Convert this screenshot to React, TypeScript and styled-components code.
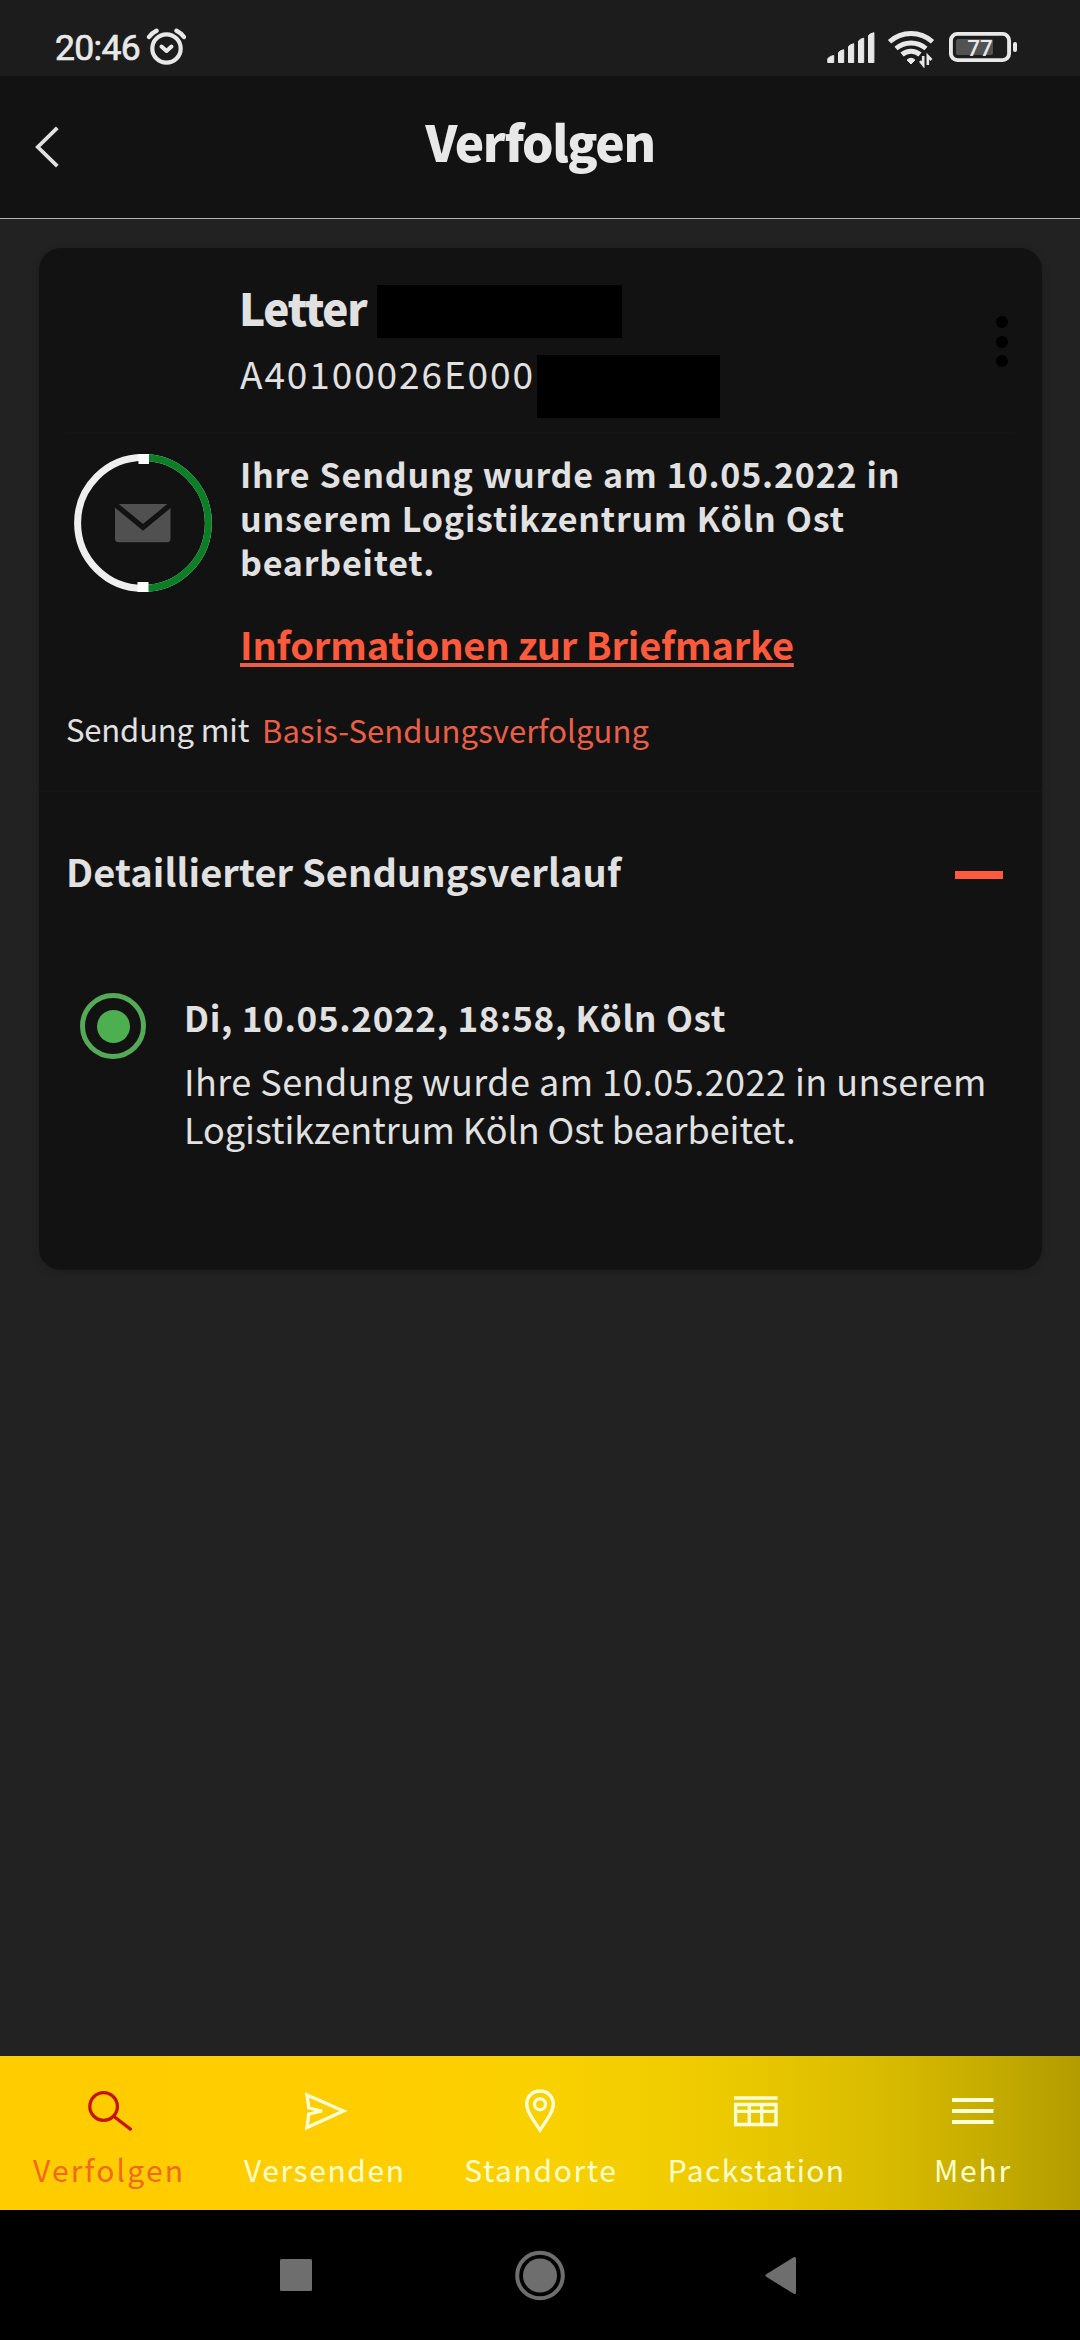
import React from "react";
import styled, { createGlobalStyle } from "styled-components";

const GlobalStyle = createGlobalStyle`
  body {
    margin: 0;
    background: #222222;
  }
  *, *::before, *::after {
    box-sizing: border-box;
  }
`;

const textFont = `"Noto Sans CJK JP", "Noto Sans", sans-serif`;

const Screen = styled.div`
  width: 1080px;
  height: 2340px;
  display: flex;
  flex-direction: column;
  background: #222222;
  color: #e1e1e1;
  font-family: ${textFont};
  overflow: hidden;
`;

/* ---------- Status bar ---------- */

const StatusBar = styled.div`
  height: 76px;
  flex: none;
  padding: 20px 63px 0 55px;
  display: flex;
  align-items: center;
  background: #1c1c1c;
  color: #e8e8e8;
`;

const Clock = styled.span`
  width: 91px;
  font: 400 35.5px/40px Roboto, sans-serif;
  letter-spacing: -0.7px;
  -webkit-text-stroke: 0.7px #e8e8e8;
`;

const StatusIcons = styled.div`
  margin-left: auto;
  display: flex;
  align-items: center;

  svg + svg {
    margin-left: 11px;
  }
  svg:last-child {
    margin-left: 13px;
  }
`;

/* ---------- Header ---------- */

const Header = styled.header`
  height: 143px;
  flex: none;
  padding: 0 32px;
  display: grid;
  grid-template-columns: 1fr auto 1fr;
  align-items: center;
  background: #121212;
  border-bottom: 1px solid #b4b4b4;
`;

const BackButton = styled.button`
  justify-self: start;
  display: flex;
  padding: 0;
  border: 0;
  background: none;
`;

const Title = styled.h1`
  margin: 0 0 12px;
  font-size: 49.5px;
  line-height: 60px;
  font-weight: 900;
  letter-spacing: -1.4px;
  color: #e8e8e8;
`;

/* ---------- Card ---------- */

const Main = styled.main`
  flex: 1;
  padding: 29px 38px 0 39px;
`;

const Card = styled.article`
  height: 1022px;
  border-radius: 22px;
  background: #121212;
  box-shadow: 0 2px 8px rgba(0, 0, 0, 0.2);
`;

const CardHead = styled.div`
  margin: 0 27px;
  padding: 37px 7px 14px 171px;
  display: flex;
  align-items: center;
  justify-content: space-between;
  border-bottom: 2px solid #151515;
`;

const Identity = styled.div`
  display: flex;
  flex-direction: column;
  gap: 17px;
`;

const IdentityRow = styled.div`
  display: flex;
  align-items: flex-start;
`;

const Name = styled.h2`
  margin: 0;
  width: 140px;
  padding-left: 2px;
  font-size: 44px;
  line-height: 44px;
  font-weight: 900;
  letter-spacing: -1.3px;
`;

const Code = styled.span`
  width: 300px;
  padding-left: 3px;
  font-size: 37px;
  line-height: 37px;
  letter-spacing: 1.9px;
`;

const Redaction = styled.span<{ $w: number; $h: number }>`
  width: ${(p) => p.$w}px;
  height: ${(p) => p.$h}px;
  background: #000;
`;

const MoreButton = styled.button`
  margin-bottom: 20px;
  padding: 0;
  border: 0;
  background: none;
  display: flex;
  flex-direction: column;
  gap: 7.4px;
`;

const Dot = styled.i`
  width: 12px;
  height: 12px;
  border-radius: 50%;
  background: #000;
`;

const StatusSection = styled.section`
  padding: 18px 27px 0 35px;
  display: flex;
  align-items: flex-start;
`;

const StatusText = styled.div`
  display: flex;
  flex-direction: column;
  align-items: flex-start;
`;

const RingSvg = styled.svg`
  flex: none;
  margin: 2px 28px 0 0;
`;

const Message = styled.p`
  margin: 0;
  font-size: 34px;
  line-height: 44px;
  font-weight: 700;
  letter-spacing: 0.8px;
  word-spacing: 0.7px;
  white-space: pre-line;
`;

const StampLink = styled.a`
  margin-top: 38px;
  font-size: 38px;
  line-height: 44px;
  font-weight: 700;
  letter-spacing: -0.15px;
  color: #ff5a3c;
  text-decoration: underline 4px #ec5f47;
  text-decoration-skip-ink: none;
  text-underline-offset: 3px;
`;

const Service = styled.div`
  height: 126px;
  padding: 43px 27px 0;
  display: flex;
  align-items: flex-start;
  gap: 9px;
  font-size: 31px;
  line-height: 40px;
  border-bottom: 2px solid #151515;
`;

const ServiceLabel = styled.span`
  width: 187px;
  letter-spacing: -0.15px;
`;

const ServiceLink = styled.a`
  padding-top: 1px;
  color: #ec5f47;
  letter-spacing: 0.1px;
`;

const HistoryHead = styled.div`
  height: 157px;
  padding: 0 39px 0 27px;
  display: flex;
  align-items: center;
  justify-content: space-between;
`;

const HistoryTitle = styled.h3`
  margin: 0;
  font-size: 38px;
  line-height: 60px;
  font-weight: 700;
  letter-spacing: 0.1px;
`;

const Minus = styled.i`
  width: 48px;
  height: 8px;
  margin-top: 9px;
  background: #ff5a3c;
`;

const Event = styled.div`
  padding: 44px 41px 0;
  display: flex;
  align-items: flex-start;
`;

const EventMarker = styled.div`
  flex: none;
  width: 66px;
  height: 66px;
  margin-right: 38px;
  border: 5px solid #55aa58;
  border-radius: 50%;
  display: grid;
  place-items: center;

  &::after {
    content: "";
    width: 33px;
    height: 33px;
    border-radius: 50%;
    background: #4cb050;
  }
`;

const EventBody = styled.div`
  padding-top: 2px;
  white-space: nowrap;
`;

const EventDate = styled.h4`
  margin: 0 0 17px;
  font-size: 35px;
  line-height: 44px;
  font-weight: 700;
  letter-spacing: 0.7px;
`;

const EventLine = styled.div<{ $spacing: number }>`
  font-size: 36px;
  line-height: 48px;
  letter-spacing: ${(p) => p.$spacing}px;
`;

/* ---------- Bottom navigation ---------- */

const Tabs = styled.nav`
  flex: none;
  height: 154px;
  display: grid;
  grid-template-columns: repeat(5, 1fr);
  background: linear-gradient(
    90deg,
    #ffcc00 0%,
    #ffcd00 35%,
    #fad100 50%,
    #ecca00 67%,
    #dabc00 81%,
    #c6ad00 91%,
    #b39c00 100%
  );
`;

const Tab = styled.a<{ $active: boolean }>`
  padding-top: 31px;
  display: flex;
  flex-direction: column;
  align-items: center;
  gap: 14px;
  color: ${(p) => (p.$active ? "#c61400" : "#ffffd6")};
`;

const TabLabel = styled.span<{ $active: boolean; $spacing: number }>`
  font-size: 30px;
  line-height: 40px;
  letter-spacing: ${(p) => p.$spacing}px;
  margin-right: -${(p) => p.$spacing}px;
  color: ${(p) => (p.$active ? "#f1691c" : "#ffffcc")};
`;

/* ---------- System navigation ---------- */

const SystemBar = styled.div`
  flex: none;
  height: 130px;
  padding: 0 175px;
  display: grid;
  grid-template-columns: repeat(3, 1fr);
  place-items: center;
  background: #000;
`;

const SystemIcon = styled.svg`
  fill: #6e6e6e;
`;

const tabs: { name: string; spacing: number; icon: React.ReactNode }[] = [
  {
    name: "Verfolgen",
    spacing: 2.2,
    icon: (
      <>
        <circle cx="19.6" cy="19.5" r="13.8" />
        <path d="M30 29.5 47.5 43" />
      </>
    ),
  },
  {
    name: "Versenden",
    spacing: 1.6,
    icon: <path d="M7 8 43.5 24 7 40.5 8.8 27 22 24 8.8 21Z" />,
  },
  {
    name: "Standorte",
    spacing: 1.6,
    icon: (
      <>
        <path d="M24 4C16.4 4 10.7 9.6 10.7 17c0 7 4.8 13.6 13.3 26 8.5-12.4 13.3-19 13.3-26C37.3 9.6 31.6 4 24 4Z" />
        <circle cx="24" cy="17.3" r="5.5" />
      </>
    ),
  },
  {
    name: "Packstation",
    spacing: 1.35,
    icon: <path d="M2 11H45.5M3.6 17.5H44V37.5H3.6ZM3.6 24.3H44M17.3 17.5V37.5M29.7 17.5V37.5" />,
  },
  {
    name: "Mehr",
    spacing: 1.8,
    icon: <path d="M4 13H45.5M4 24H45.5M4 35H45.5" strokeWidth="4" />,
  },
];

const AlarmIcon = () => (
  <svg width="40" height="40" fill="none" stroke="#e8e8e8" strokeLinecap="round">
    <circle cx="20.5" cy="20.5" r="14.2" strokeWidth="4.2" />
    <path d="M15.5 18.5 20.5 23 25.5 18.5" strokeWidth="4" strokeLinejoin="round" />
    <path d="M3 9Q6 5 10.5 2.8M38 9Q35 5 30.5 2.8" strokeWidth="4.4" />
  </svg>
);

const SignalIcon = () => (
  <svg width="48" height="40" fill="#e8e8e8" stroke="#e8e8e8" strokeLinejoin="round">
    <path d="M.8 34.5V30.5Q3 28 6.700 27.5V34.5ZM11.5 34.5V24.5Q13 22.5 16.7 21.7V34.5ZM21.5 34.5V18.5Q23 16.5 26.7 15.7V34.5ZM31.5 34.5V13Q33 11 36.7 10.2V34.5ZM41.5 34.5V7.5Q43 5.5 46.9 4.7V34.5Z" />
  </svg>
);

const WifiIcon = () => (
  <svg width="50" height="40" fill="none" stroke="#e8e8e8" strokeWidth="4.9">
    <path d="M3.5 13.8A32 32 0 0 1 46.5 13.8M10 20.5A23.3 23.3 0 0 1 40 20.5M16 26.5A14 14 0 0 1 34 26.5" />
    <path d="M21 32Q25 28.5 29 32L25 36Z" fill="#e8e8e8" strokeWidth="1" strokeLinejoin="round" />
    <path d="M37.2 28V37L34 33M41.8 37V28L45.5 32" strokeWidth="2.6" />
  </svg>
);

const BatteryIcon = () => (
  <svg width="68" height="40">
    <rect x="1.9" y="5.9" width="58.2" height="26.2" rx="6.5" fill="none" stroke="#e8e8e8" strokeWidth="3.9" />
    <rect x="64" y="14" width="4" height="10" rx="2" fill="#e8e8e8" />
    <rect x="7" y="11" width="37" height="16" rx="2" fill="#525252" />
    <text x="31" y="27.5" textAnchor="middle" fontFamily="Roboto, sans-serif" fontSize="22.5" fontWeight="500" fill="#e8e8e8">
      77
    </text>
  </svg>
);

const ProgressRing = () => (
  <RingSvg width="138" height="138" fill="none">
    <circle cx="69" cy="69" r="65.4" stroke="#efefef" strokeWidth="7" />
    <path d="M69 3.6A65.4 65.4 0 0 1 69 134.4" stroke="#0c7f26" strokeWidth="7" />
    <path d="M64.5 0H75V10H64.5ZM63.5 128H74.5V138H63.5Z" fill="#fff" />
    <rect x="41" y="50" width="55.5" height="38.3" rx="3.5" fill="#505050" />
    <path d="M34 44.6 69 73.3 104 44.6" stroke="#121212" strokeWidth="5.2" />
  </RingSvg>
);

export default function App() {
  return (
    <>
      <GlobalStyle />
      <Screen>
        <StatusBar>
          <Clock>20:46</Clock>
          <AlarmIcon />
          <StatusIcons>
            <SignalIcon />
            <WifiIcon />
            <BatteryIcon />
          </StatusIcons>
        </StatusBar>

        <Header>
          <BackButton aria-label="Zurück">
            <svg width="30" height="44" fill="none" stroke="#e0e0e0" strokeWidth="3.8">
              <path d="M25.3 2.8 5.8 22 25.3 41.2" />
            </svg>
          </BackButton>
          <Title>Verfolgen</Title>
        </Header>

        <Main>
          <Card>
            <CardHead>
              <Identity>
                <IdentityRow>
                  <Name>Letter</Name>
                  <Redaction $w={245} $h={53} />
                </IdentityRow>
                <IdentityRow>
                  <Code>A40100026E000</Code>
                  <Redaction $w={183} $h={63} />
                </IdentityRow>
              </Identity>
              <MoreButton aria-label="Mehr Optionen">
                <Dot />
                <Dot />
                <Dot />
              </MoreButton>
            </CardHead>

            <StatusSection>
              <ProgressRing />
              <StatusText>
                <Message>
                  {"Ihre Sendung wurde am 10.05.2022 in\nunserem Logistikzentrum Köln Ost\nbearbeitet."}
                </Message>
                <StampLink>Informationen zur Briefmarke</StampLink>
              </StatusText>
            </StatusSection>

            <Service>
              <ServiceLabel>Sendung mit</ServiceLabel>
              <ServiceLink>Basis-Sendungsverfolgung</ServiceLink>
            </Service>

            <HistoryHead>
              <HistoryTitle>Detaillierter Sendungsverlauf</HistoryTitle>
              <Minus />
            </HistoryHead>

            <Event>
              <EventMarker />
              <EventBody>
                <EventDate>Di, 10.05.2022, 18:58, Köln Ost</EventDate>
                <EventLine $spacing={0.45}>Ihre Sendung wurde am 10.05.2022 in unserem</EventLine>
                <EventLine $spacing={-0.05}>Logistikzentrum Köln Ost bearbeitet.</EventLine>
              </EventBody>
            </Event>
          </Card>
        </Main>

        <Tabs>
          {tabs.map(({ name, spacing, icon }, i) => (
            <Tab key={name} $active={i === 0}>
              <svg width="48" height="48" fill="none" stroke="currentColor" strokeWidth="3.3">
                {icon}
              </svg>
              <TabLabel $active={i === 0} $spacing={spacing}>
                {name}
              </TabLabel>
            </Tab>
          ))}
        </Tabs>

        <SystemBar>
          <SystemIcon width="34" height="32">
            <rect width="32" height="32" rx="1.5" />
          </SystemIcon>
          <SystemIcon width="52" height="52">
            <circle cx="26" cy="26.5" r="22.8" fill="none" stroke="#6e6e6e" strokeWidth="4" />
            <circle cx="26" cy="26.5" r="17" />
          </SystemIcon>
          <SystemIcon width="36" height="38">
            <path d="M2 19.5 29.5 2.5V36.5Z" stroke="#6e6e6e" strokeWidth="3" strokeLinejoin="round" />
          </SystemIcon>
        </SystemBar>
      </Screen>
    </>
  );
}
